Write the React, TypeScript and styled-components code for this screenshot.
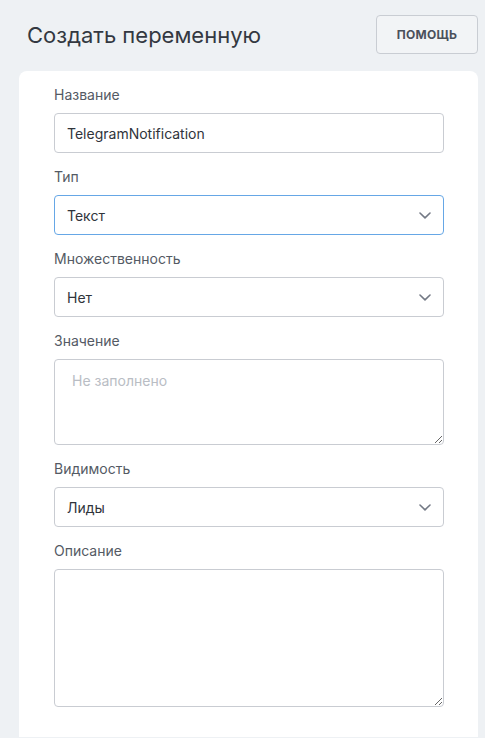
import React from "react";
import styled, { createGlobalStyle, css } from "styled-components";

const GlobalStyle = createGlobalStyle`
  html, body {
    margin: 0;
    padding: 0;
    background: #eef1f4;
    font-family: Inter, "Noto Sans", sans-serif;
  }
  * { box-sizing: border-box; }
`;

const Page = styled.div`
  min-height: 738px;
  padding: 0 7px 0 19px;
  background: #eef1f4;
`;

const Header = styled.header`
  display: flex;
  align-items: center;
  justify-content: space-between;
  height: 71px;
  padding: 0 0 2px 8px;
`;

const Title = styled.h1`
  margin: 0;
  font-size: 22px;
  font-weight: 400;
  color: #333841;
  letter-spacing: 0;
`;

const HelpButton = styled.button`
  width: 102px;
  height: 39px;
  border: 1px solid #c9cdd3;
  border-radius: 4px;
  background: #f2f4f6;
  color: #4a505b;
  font-family: Inter, "Noto Sans", sans-serif;
  font-size: 12px;
  font-weight: 700;
  letter-spacing: 0.3px;
  text-transform: uppercase;
`;

const Card = styled.section`
  background: #ffffff;
  border-radius: 8px 8px 0 0;
  padding: 14px 34px 30px 35px;
  display: flex;
  flex-direction: column;
  gap: 14px;
`;

const Field = styled.div`
  display: flex;
  flex-direction: column;
  gap: 8px;
`;

const Label = styled.label`
  font-size: 14px;
  line-height: 20px;
  color: #545a64;
`;

const boxBase = css`
  width: 100%;
  border: 1px solid #c9ccd2;
  border-radius: 4px;
  background: #fff;
  font-family: Inter, "Noto Sans", sans-serif;
  font-size: 14px;
  color: #30343b;
  outline: none;
`;

const TextInput = styled.input`
  ${boxBase};
  height: 40px;
  padding: 0 12px;
  text-decoration: underline dotted #e0706e;
  text-underline-offset: 4px;
`;

const SelectBox = styled.div<{ $focused?: boolean }>`
  ${boxBase};
  height: 40px;
  padding: 0 12px 0 12px;
  display: flex;
  align-items: center;
  justify-content: space-between;
  border-color: ${(p) => (p.$focused ? "#66a7e6" : "#c9ccd2")};
`;

const TextArea = styled.textarea<{ $h: number }>`
  ${boxBase};
  display: block;
  height: ${(p) => p.$h}px;
  padding: 12px 17px;
  resize: vertical;
  &::placeholder {
    color: #b9bdc4;
  }
`;

const Chevron = () => (
  <svg width="12" height="7" viewBox="0 0 12 7" fill="none">
    <path d="M1 1 L6 5.8 L11 1" stroke="#737985" strokeWidth="1.6" strokeLinecap="round" strokeLinejoin="round" />
  </svg>
);

const Select = ({ value, focused }: { value: string; focused?: boolean }) => (
  <SelectBox $focused={focused}>
    <span>{value}</span>
    <Chevron />
  </SelectBox>
);

export default function App() {
  return (
    <>
      <GlobalStyle />
      <Page>
        <Header>
          <Title>Создать переменную</Title>
          <HelpButton>Помощь</HelpButton>
        </Header>
        <Card>
          <Field>
            <Label>Название</Label>
            <TextInput defaultValue="TelegramNotification" spellCheck={false} />
          </Field>
          <Field>
            <Label>Тип</Label>
            <Select value="Текст" focused />
          </Field>
          <Field>
            <Label>Множественность</Label>
            <Select value="Нет" />
          </Field>
          <Field>
            <Label>Значение</Label>
            <TextArea $h={86} placeholder="Не заполнено" />
          </Field>
          <Field>
            <Label>Видимость</Label>
            <Select value="Лиды" />
          </Field>
          <Field>
            <Label>Описание</Label>
            <TextArea $h={138} />
          </Field>
        </Card>
      </Page>
    </>
  );
}
